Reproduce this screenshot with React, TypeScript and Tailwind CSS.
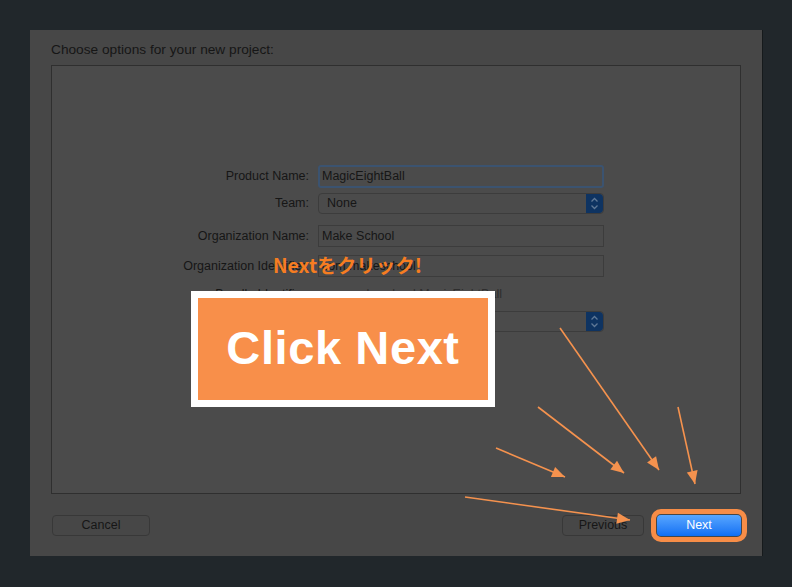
import React from "react";

const arrows = [
  { x1: 560, y1: 328, x2: 659, y2: 470 },
  { x1: 538, y1: 407, x2: 624, y2: 473 },
  { x1: 496, y1: 448, x2: 565, y2: 477 },
  { x1: 678, y1: 407, x2: 695, y2: 484 },
  { x1: 465, y1: 497, x2: 630, y2: 520 },
];

function arrowHead(a: { x1: number; y1: number; x2: number; y2: number }) {
  const dx = a.x2 - a.x1;
  const dy = a.y2 - a.y1;
  const len = Math.hypot(dx, dy);
  const ux = dx / len;
  const uy = dy / len;
  const bx = a.x2 - ux * 13;
  const by = a.y2 - uy * 13;
  const px = -uy * 5.5;
  const py = ux * 5.5;
  return `${a.x2},${a.y2} ${bx + px},${by + py} ${bx - px},${by - py}`;
}

function Stepper() {
  return (
    <div className="w-[17px] h-full bg-[#0e3361] rounded-r-[4px] flex items-center justify-center">
      <svg width="9" height="13" viewBox="0 0 9 13" fill="none" stroke="#5f7896" strokeWidth="1.3">
        <path d="M1.5 4.5 L4.5 1.5 L7.5 4.5" />
        <path d="M1.5 8.5 L4.5 11.5 L7.5 8.5" />
      </svg>
    </div>
  );
}

function Row({ label, children, className }: { label: string; children: React.ReactNode; className: string }) {
  return (
    <div className={`flex items-center ${className}`}>
      <div className="w-[167px] text-right pr-[9px] text-[12.5px] text-[#161616] leading-none">{label}</div>
      {children}
    </div>
  );
}

export default function App() {
  return (
    <div className="relative w-[792px] h-[587px] bg-[#21272b] overflow-hidden" style={{ fontFamily: '"Liberation Sans", Arial, sans-serif' }}>
      <div className="ml-[30px] pt-[30px]">
        <div className="w-[733px] h-[526px] bg-[#474747] border-r border-[#161a1c] px-[21px] pt-[12px] flex flex-col">
          <div className="text-[13.7px] leading-[16px] text-[#161616]">Choose options for your new project:</div>
          <div className="mt-[7px] h-[429px] border border-[#2f2f2f] bg-[#4b4b4b] pt-[99px] pl-[99px]">
            <Row label="Product Name:" className="h-[23px]">
              <div className="w-[286px] h-[23px] border-[2px] border-[#3b5370] rounded-[3px] flex items-center pl-[2px] text-[12.5px] text-[#161616]">
                MagicEightBall
              </div>
            </Row>
            <Row label="Team:" className="h-[21px] mt-[5px]">
              <div className="w-[286px] h-[21px] border border-[#3c3c3c] rounded-[4px] flex items-center justify-between text-[12.5px] text-[#161616]">
                <span className="pl-[8px]">None</span>
                <Stepper />
              </div>
            </Row>
            <Row label="Organization Name:" className="h-[22px] mt-[11px]">
              <div className="w-[286px] h-[22px] border border-[#3c3c3c] flex items-center pl-[3px] text-[12.5px] text-[#161616]">
                Make School
              </div>
            </Row>
            <Row label="Organization Identifier:" className="h-[22px] mt-[8px]">
              <div className="w-[286px] h-[22px] border border-[#3c3c3c] flex items-center pl-[3px] text-[12.5px] text-[#161616]">
                com.makeschool
              </div>
            </Row>
            <Row label="Bundle Identifier:" className="h-[16px] mt-[9px]">
              <div className="pl-[4px] text-[12.5px] text-[#2e2e2e]">com.makeschool.MagicEightBall</div>
            </Row>
            <Row label="Language:" className="h-[21px] mt-[9px]">
              <div className="w-[286px] h-[21px] border border-[#3c3c3c] rounded-[4px] flex items-center justify-between text-[12.5px] text-[#161616]">
                <span className="pl-[8px]">Swift</span>
                <Stepper />
              </div>
            </Row>
          </div>
          <div className="mt-[21px] flex items-center justify-between">
            <button className="ml-[1px] w-[98px] h-[21px] border border-[#383838] rounded-[4px] text-[12.5px] text-[#161616]">Cancel</button>
            <div className="flex items-center gap-[13px]">
              <button className="w-[82px] h-[21px] border border-[#383838] rounded-[4px] text-[12.5px] text-[#161616]">Previous</button>
              <button className="w-[84px] h-[21px] rounded-[4px] bg-gradient-to-b from-[#57a6ff] to-[#0d6ff3] text-[12.5px] text-white outline-[5px] outline-solid outline-[#f78d47] outline-offset-[1px]">
                Next
              </button>
            </div>
          </div>
        </div>
      </div>

      <div className="absolute left-[273px] top-[252px] text-[19.5px] font-bold text-[#f67d21] leading-[26px]" style={{ fontFamily: '"Noto Sans CJK JP", sans-serif' }}>
        Nextをクリック!
      </div>

      <div className="absolute left-[191px] top-[291px] w-[304px] h-[116px] bg-white p-[7px]">
        <div className="w-full h-full bg-[#f88f4a] flex items-center justify-center text-white font-bold text-[47px] tracking-[0.6px] pb-[2px]" style={{ fontFamily: '"Liberation Sans", Arial, sans-serif' }}>
          Click Next
        </div>
      </div>

      <svg className="absolute left-0 top-0" width="792" height="587" viewBox="0 0 792 587">
        {arrows.map((a, i) => (
          <g key={i}>
            <line x1={a.x1} y1={a.y1} x2={a.x2} y2={a.y2} stroke="#f5924e" strokeWidth="1.6" />
            <polygon points={arrowHead(a)} fill="#f5924e" />
          </g>
        ))}
      </svg>
    </div>
  );
}
